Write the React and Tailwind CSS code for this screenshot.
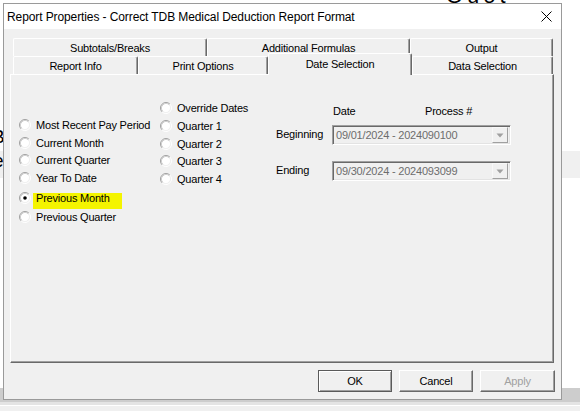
import React from "react";

function Radio({ checked }) {
  return (
    <svg width="12" height="12" viewBox="0 0 12 12" className="shrink-0">
      <circle cx="6" cy="6" r="4.5" fill="#ffffff" />
      <path d="M2.11 9.89 A5.5 5.5 0 0 1 9.89 2.11" fill="none" stroke="#a0a0a0" strokeWidth="1" />
      <path d="M9.89 2.11 A5.5 5.5 0 0 1 2.11 9.89" fill="none" stroke="#ffffff" strokeWidth="1" />
      <path d="M2.82 9.18 A4.5 4.5 0 0 1 9.18 2.82" fill="none" stroke="#cfcfcf" strokeWidth="1" />
      <path d="M9.18 2.82 A4.5 4.5 0 0 1 2.82 9.18" fill="none" stroke="#f0f0f0" strokeWidth="1" />
      {checked && <circle cx="6" cy="6" r="1.8" fill="#000000" />}
    </svg>
  );
}

function RadioRow({ label, checked, highlight, extraClass = "" }) {
  return (
    <div className={`relative flex h-[18px] items-center gap-[5px] ${extraClass}`}>
      <Radio checked={checked} />
      {highlight && (
        <div className="absolute left-[14px] top-[4px] h-[16px] w-[89px] bg-[#f4f400]" />
      )}
      <span className="relative whitespace-nowrap">{label}</span>
    </div>
  );
}

function Tab({ label, w, selected }) {
  if (selected) {
    return (
      <div
        className={`relative z-10 -mb-[1px] flex h-[22px] items-start justify-center rounded-t-[2px] border-l border-t border-r border-white border-r-[#696969] bg-[#f0f0f0] pt-[2px] shadow-[inset_-1px_0_0_#a0a0a0] ${w}`}
      >
        {label}
      </div>
    );
  }
  return (
    <div
      className={`flex h-[18px] items-center justify-center rounded-t-[2px] border-l border-t border-r border-white border-r-[#696969] bg-[#f0f0f0] pt-[2px] shadow-[inset_-1px_0_0_#a0a0a0] ${w}`}
    >
      {label}
    </div>
  );
}

function Combo({ value }) {
  return (
    <div className="flex h-[20px] w-[179px] items-center border border-t-[#a0a0a0] border-l-[#a0a0a0] border-b-white border-r-white bg-[#f0f0f0] shadow-[inset_1px_1px_0_#696969,inset_-1px_-1px_0_#e3e3e3]">
      <span className="flex-1 pl-[3px] text-[#6d6d6d] whitespace-nowrap">{value}</span>
      <div className="mr-[2px] flex h-[16px] w-[16px] items-center justify-center border border-t-[#f8f8f8] border-l-[#f8f8f8] border-b-[#a0a0a0] border-r-[#a0a0a0] bg-[#f0f0f0]">
        <svg width="8" height="5" viewBox="0 0 8 5">
          <path d="M0.5 0.5 H7.5 L4 4.5 Z" fill="#a0a0a0" />
        </svg>
      </div>
    </div>
  );
}

export default function App() {
  return (
    <div className="relative h-[411px] w-[580px] overflow-hidden bg-white font-['Liberation_Sans',Arial,sans-serif] text-[11px] tracking-[-0.2px] text-black">
      {/* background page behind the dialog */}
      <div className="flex h-full w-full flex-col">
        <div className="h-[151px] bg-white" />
        <div className="h-[27px] bg-[#f0f0f0]" />
        <div className="h-[210px] bg-white" />
        <div className="h-[14px] bg-[#cdcdcd]" />
        <div className="h-[3px] bg-[#e4e4e4]" />
        <div className="h-[1px] bg-white" />
        <div className="flex-1 bg-[#f0f0f0]" />
      </div>
      <span className="absolute left-[-8px] top-[127px] text-[19px] leading-none">B</span>
      <span className="absolute left-[-7px] top-[151px] text-[19px] leading-none">es</span>
      <span className="absolute left-[-6px] top-[282px] text-[19px] leading-none">-</span>
      <span className="absolute left-[446px] top-[-15px] text-[22px] leading-none tracking-[4px]">Quot</span>

      {/* dialog window */}
      <div className="absolute left-[3px] top-[3px] flex h-[397px] w-[559px] flex-col border border-[#9a9a9a] bg-[#f0f0f0]">
        {/* title bar */}
        <div className="flex h-[25px] shrink-0 items-center justify-between bg-white pl-[3px] pr-[9px]">
          <span className="whitespace-nowrap text-[12px] tracking-[-0.1px]">
            Report Properties - Correct TDB Medical Deduction Report Format
          </span>
          <svg width="11" height="11" viewBox="0 0 11 11">
            <path d="M0.5 0.5 L10.5 10.5 M10.5 0.5 L0.5 10.5" stroke="#000" strokeWidth="1" />
          </svg>
        </div>

        {/* body */}
        <div className="flex flex-1 flex-col pt-[9px]">
          {/* tabs */}
          <div className="ml-[9px] flex w-[540px] flex-col">
            <div className="flex h-[18px]">
              <Tab label="Subtotals/Breaks" w="w-[194px]" />
              <Tab label="Additional Formulas" w="w-[203px]" />
              <Tab label="Output" w="w-[143px]" />
            </div>
            <div className="flex h-[18px] items-end">
              <Tab label="Report Info" w="w-[125px]" />
              <Tab label="Print Options" w="w-[130px]" />
              <Tab label="Date Selection" w="w-[144px]" selected />
              <Tab label="Data Selection" w="w-[141px]" />
            </div>
          </div>

          {/* panel */}
          <div className="ml-[6px] flex h-[289px] w-[544px] border border-t-white border-l-white border-r-[#696969] border-b-[#696969] bg-[#f0f0f0] pl-[8px] pt-[24px] shadow-[inset_-1px_-1px_0_#a0a0a0]">
            {/* column 1 */}
            <div className="mt-[17px] flex w-[141px] flex-col">
              <RadioRow label="Most Recent Pay Period" />
              <RadioRow label="Current Month" />
              <RadioRow label="Current Quarter" extraClass="-mt-[1px]" />
              <RadioRow label="Year To Date" />
              <RadioRow label="Previous Month" checked highlight extraClass="mt-[2px]" />
              <RadioRow label="Previous Quarter" extraClass="mt-[1px]" />
            </div>
            {/* column 2 */}
            <div className="flex w-[116px] flex-col">
              <RadioRow label="Override Dates" />
              <RadioRow label="Quarter 1" />
              <RadioRow label="Quarter 2" />
              <RadioRow label="Quarter 3" extraClass="-mt-[1px]" />
              <RadioRow label="Quarter 4" />
            </div>
            {/* date section */}
            <div className="mt-[5px] flex flex-col">
              <div className="flex h-[14px] items-center pl-[57px]">
                <span className="w-[92px]">Date</span>
                <span>Process #</span>
              </div>
              <div className="mt-[7px] flex items-start">
                <span className="mt-[1px] w-[56px]">Beginning</span>
                <Combo value="09/01/2024 - 2024090100" />
              </div>
              <div className="mt-[16px] flex items-start">
                <span className="mt-[1px] w-[56px]">Ending</span>
                <Combo value="09/30/2024 - 2024093099" />
              </div>
            </div>
          </div>

          {/* buttons */}
          <div className="mt-[7px] flex justify-end gap-[7px] pr-[6px]">
            <button className="flex h-[22px] w-[74px] items-center justify-center border border-[#5a5a5a] bg-[#f0f0f0] shadow-[inset_1px_1px_0_#ffffff,inset_-1px_-1px_0_#a0a0a0]">
              OK
            </button>
            <button className="flex h-[22px] w-[74px] items-center justify-center border border-t-white border-l-white border-b-[#696969] border-r-[#696969] bg-[#f0f0f0] shadow-[inset_-1px_-1px_0_#a0a0a0]">
              Cancel
            </button>
            <button className="flex h-[22px] w-[75px] items-center justify-center border border-t-white border-l-white border-b-[#696969] border-r-[#696969] bg-[#f0f0f0] text-[#a0a0a0] shadow-[inset_-1px_-1px_0_#a0a0a0]">
              Apply
            </button>
          </div>
        </div>
      </div>
    </div>
  );
}
